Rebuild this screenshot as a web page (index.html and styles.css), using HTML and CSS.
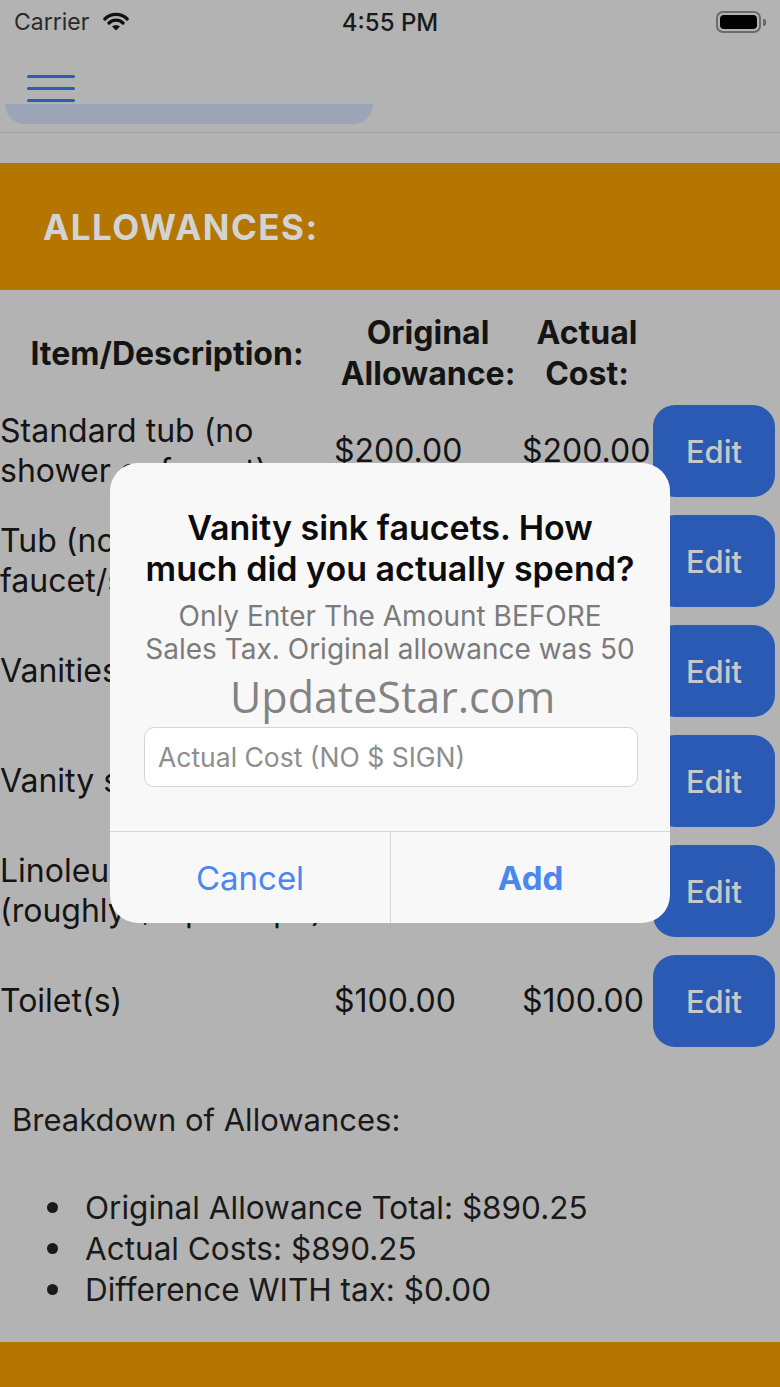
FILE: index.html
```html
<!DOCTYPE html>
<html lang="en">
<head>
  <meta charset="UTF-8" />
  <title>Allowances</title>
  <meta name="viewport" content="width=device-width, initial-scale=1.0" />
  <link rel="stylesheet" href="styles.css">
</head>
<body>
  <div class="status-bar">
    <div class="status-left">
      <span class="carrier">Carrier</span>
      <svg class="wifi" width="28" height="21" viewBox="0 0 26 20">
        <path d="M2.4 7.6 A15 15 0 0 1 23.6 7.6" fill="none" stroke="#111" stroke-width="3.2" stroke-linecap="round" />
        <path d="M6.3 11.4 A9.5 9.5 0 0 1 19.7 11.4" fill="none" stroke="#111" stroke-width="3.2" stroke-linecap="round" />
        <path d="M13 18.6 L9.2 14.8 A5.4 5.4 0 0 1 16.8 14.8 Z" fill="#111" />
      </svg>
    </div>
    <div class="status-time">4:55 PM</div>
    <div class="status-right">
      <div class="battery"><div class="battery-fill"></div></div>
      <div class="battery-cap"></div>
    </div>
  </div>

  <div class="toolbar">
    <div class="menu-button">
      <span></span><span></span><span></span>
    </div>
    <div class="toolbar-tab"></div>
  </div>

  <div class="section-banner">ALLOWANCES:</div>

  <table class="allowance-table">
    <colgroup>
      <col class="col-item" />
      <col class="col-original" />
      <col class="col-actual" />
      <col class="col-action" />
    </colgroup>
    <thead>
      <tr>
        <th>Item/Description:</th>
        <th>Original Allowance:</th>
        <th>Actual Cost:</th>
        <th></th>
      </tr>
    </thead>
    <tbody>
      <tr>
        <td>Standard tub (no shower or faucet)</td>
        <td>$200.00</td>
        <td>$200.00</td>
        <td><button class="edit-button">Edit</button></td>
      </tr>
      <tr>
        <td>Tub (no faucet/shower)</td>
        <td>$150.00</td>
        <td>$150.00</td>
        <td><button class="edit-button">Edit</button></td>
      </tr>
      <tr>
        <td>Vanities</td>
        <td>$250.00</td>
        <td>$250.00</td>
        <td><button class="edit-button">Edit</button></td>
      </tr>
      <tr>
        <td>Vanity sink faucets</td>
        <td>$50.00</td>
        <td>$50.00</td>
        <td><button class="edit-button">Edit</button></td>
      </tr>
      <tr>
        <td>Linoleum flooring (roughly $4 per sq ft)</td>
        <td>$140.25</td>
        <td>$140.25</td>
        <td><button class="edit-button">Edit</button></td>
      </tr>
      <tr>
        <td>Toilet(s)</td>
        <td>$100.00</td>
        <td>$100.00</td>
        <td><button class="edit-button">Edit</button></td>
      </tr>
    </tbody>
  </table>

  <p class="breakdown-title">Breakdown of Allowances:</p>
  <ul class="breakdown-list">
    <li>Original Allowance Total: $890.25</li>
    <li>Actual Costs: $890.25</li>
    <li>Difference WITH tax: $0.00</li>
  </ul>

  <div class="footer-band"></div>

  <div class="alert">
    <div class="alert-body">
      <div class="alert-title">Vanity sink faucets. How<br>much did you actually spend?</div>
      <div class="alert-message">Only Enter The Amount BEFORE<br>Sales Tax. Original allowance was 50</div>
      <input class="alert-input" type="text" placeholder="Actual Cost (NO $ SIGN)" />
    </div>
    <div class="alert-actions">
      <button class="alert-button">Cancel</button>
      <button class="alert-button alert-button-strong">Add</button>
    </div>
  </div>

  <div class="watermark">UpdateStar.com</div>
</body>
</html>
```

FILE: styles.css
```css
* {
  box-sizing: border-box;
}

body {
  margin: 0;
  width: 780px;
  min-height: 1387px;
  position: relative;
  overflow: hidden;
  background: #b3b3b3;
  color: #141414;
  font-family: Inter, "Noto Sans", sans-serif;
}

/* status bar */

.status-bar {
  height: 44px;
  display: grid;
  grid-template-columns: 1fr auto 1fr;
  align-items: center;
  padding: 0 14px 0 14px;
}

.status-left {
  display: flex;
  align-items: center;
  gap: 13px;
}

.carrier {
  font-size: 23px;
  color: #2a2a2a;
}

.wifi {
  margin-top: -2px;
}

.status-time {
  font-size: 24px;
  font-weight: 500;
  color: #1a1a1a;
}

.status-right {
  display: flex;
  justify-content: flex-end;
  align-items: center;
  gap: 2px;
}

.battery {
  width: 45px;
  height: 22px;
  border: 2px solid #6a6a6a;
  border-radius: 7px;
  padding: 2px;
}

.battery-fill {
  width: 100%;
  height: 100%;
  background: #000;
  border-radius: 4px;
}

.battery-cap {
  width: 3px;
  height: 7px;
  background: #6a6a6a;
  border-radius: 0 2px 2px 0;
}

/* toolbar */

.toolbar {
  height: 89px;
  padding-top: 31px;
  border-bottom: 1px solid #a2a2a2;
}

.menu-button {
  margin-left: 27px;
  width: 48px;
  display: flex;
  flex-direction: column;
  gap: 9px;
}

.menu-button span {
  display: block;
  height: 3px;
  background: #2d5bb5;
  border-radius: 2px;
}

.toolbar-tab {
  margin: 2px 0 0 5px;
  width: 368px;
  height: 20px;
  background: #9ba5b7;
  border-radius: 0 0 22px 22px;
}

/* banner */

.section-banner {
  margin-top: 30px;
  height: 127px;
  padding-left: 43px;
  display: flex;
  align-items: center;
  background: #b47600;
  color: #d3d3d3;
  font-size: 35px;
  font-weight: 700;
  letter-spacing: 1.5px;
}

/* table */

.allowance-table {
  width: 780px;
  border-collapse: collapse;
  table-layout: fixed;
}

.col-item { width: 334px; }
.col-original { width: 188px; }
.col-actual { width: 130px; }
.col-action { width: 128px; }

.allowance-table th {
  height: 106px;
  padding: 20px 0 0;
  font-size: 32px;
  font-weight: 700;
  line-height: 41px;
  text-align: center;
  vertical-align: middle;
}

.allowance-table td {
  height: 110px;
  padding: 0;
  font-size: 32px;
  line-height: 40px;
  vertical-align: middle;
}

.edit-button {
  display: block;
  width: 122px;
  height: 92px;
  margin-left: 1px;
  border: none;
  border-radius: 22px;
  background: #2a5ab4;
  color: #c8c8c8;
  font-family: Inter, "Noto Sans", sans-serif;
  font-size: 31px;
  font-weight: 500;
}

/* breakdown */

.breakdown-title {
  margin: 44px 0 0;
  padding-left: 12px;
  font-size: 31px;
  line-height: 40px;
  color: #1a1a1a;
}

.breakdown-list {
  margin: 47px 0 0;
  padding-left: 47px;
  list-style: none;
  font-size: 31.5px;
  line-height: 41px;
  color: #1a1a1a;
}

.breakdown-list li {
  display: flex;
  align-items: center;
}

.breakdown-list li::before {
  content: "";
  flex: none;
  width: 11px;
  height: 11px;
  margin-right: 27px;
  border-radius: 50%;
  background: #1a1a1a;
}

.footer-band {
  margin-top: 32px;
  height: 60px;
  background: #b47600;
}

/* alert */

.alert {
  position: absolute;
  left: 110px;
  top: 463px;
  width: 560px;
  background: #f8f8f8;
  border-radius: 28px;
  overflow: hidden;
}

.alert-body {
  padding: 44px 30px 44px 30px;
  text-align: center;
}

.alert-title {
  font-size: 34px;
  font-weight: 600;
  line-height: 41px;
  color: #0c0c0c;
}

.alert-message {
  margin-top: 11px;
  font-size: 28px;
  line-height: 33px;
  color: #7b7b7b;
}

.alert-input {
  display: block;
  width: 494px;
  height: 60px;
  margin: 61px 0 0 4px;
  padding: 0 13px;
  border: 1px solid #d4d4d4;
  border-radius: 10px;
  background: #fff;
  font-family: Inter, "Noto Sans", sans-serif;
  font-size: 26.5px;
  outline: none;
}

.alert-input::placeholder {
  color: #8e8e8e;
}

.alert-actions {
  display: grid;
  grid-template-columns: 1fr 1fr;
  border-top: 1px solid #d6d6d6;
}

.alert-button {
  height: 91px;
  border: none;
  background: transparent;
  color: #4a88ee;
  font-family: Inter, "Noto Sans", sans-serif;
  font-size: 33px;
}

.alert-button + .alert-button {
  border-left: 1px solid #d6d6d6;
}

.alert-button-strong {
  font-weight: 700;
}

.watermark {
  position: absolute;
  left: 230px;
  top: 672px;
  font-family: "Open Sans", sans-serif;
  font-size: 43px;
  line-height: 50px;
  color: rgba(110, 110, 110, 0.85);
}
```
